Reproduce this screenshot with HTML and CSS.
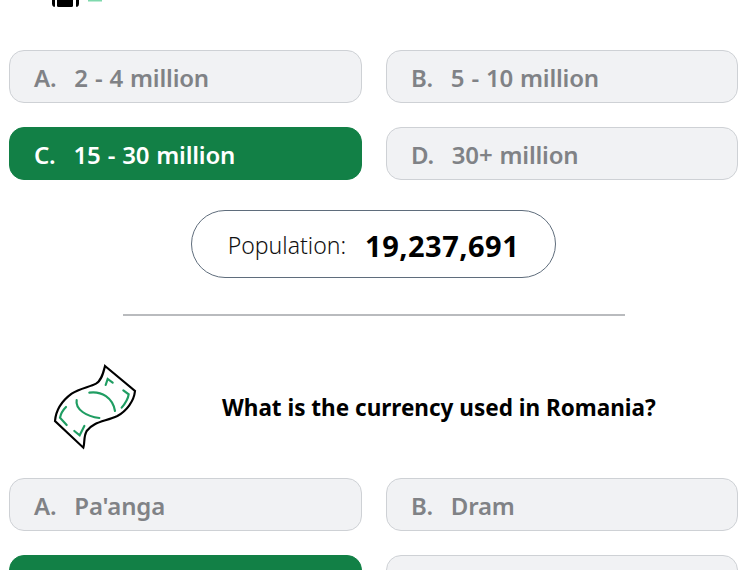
FILE: index.html
```html
<!DOCTYPE html>
<html lang="en">
<head>
<meta charset="utf-8">
<title>Romania quiz</title>
<link rel="stylesheet" href="styles.css">
</head>
<body>
<div class="sliver">
  <svg class="sliver-icon" width="60" height="8" viewBox="0 0 60 8" aria-hidden="true">
    <path d="M3 0h3v6.800h-1.500q-1.500-1-1.500-3z" fill="#000"/>
    <path d="M8 0h16v5.500q0 1.500-1.500 1.500h-13q-1.500 0-1.500-1.500z" fill="#000"/>
    <path d="M27 0h3v3.800q0 2-1.500 3h-1.500z" fill="#000"/>
    <rect x="39" y="0" width="14" height="1.500" fill="#7fd9ad"/>
  </svg>
</div>
<section class="options first">
  <div class="option"><span class="key">A.</span><span>2 - 4 million</span></div>
  <div class="option"><span class="key">B.</span><span>5 - 10 million</span></div>
  <div class="option correct"><span class="key">C.</span><span>15 - 30 million</span></div>
  <div class="option"><span class="key">D.</span><span>30+ million</span></div>
</section>
<div class="stat-wrap">
  <div class="stat"><span class="stat-label">Population:</span><span class="stat-value">19,237,691</span></div>
</div>
<hr class="divider">
<div class="question">
  <svg class="bill" width="130" height="110" viewBox="0 0 390 330" aria-hidden="true">
    <path d="M225 45L315 120C312 150 290 180 262 195C225 212 190 212 170 240C160 258 165 275 160 290L75 210C78 175 95 150 125 128C150 112 180 108 198 98C215 88 220 65 225 45Z" fill="#fff" stroke="#000" stroke-width="6.500" stroke-linejoin="miter"/>
    <g fill="none" stroke="#1f9d62" stroke-width="6.500" stroke-linecap="round">
      <path d="M178 125C215 120 248 140 255 180"/>
      <path d="M140 147C135 175 170 197 208 201"/>
      <path d="M227 102L233 84L248 95"/>
      <path d="M280 118L296 130C294 145 285 158 275 170"/>
      <path d="M108 168C98 178 92 190 90 200L110 222"/>
      <path d="M133 240L149 253L163 225"/>
    </g>
  </svg>
  <h2 class="question-text">What is the currency used in Romania?</h2>
</div>
<section class="options second">
  <div class="option"><span class="key">A.</span><span>Pa'anga</span></div>
  <div class="option"><span class="key">B.</span><span>Dram</span></div>
</section>
<div class="cut-row">
  <div class="cut-option correct"></div>
  <div class="cut-option"></div>
</div>
</body>
</html>
```
FILE: styles.css
```css
* { box-sizing: border-box; }
html, body { margin: 0; height: 570px; overflow: hidden; background: #fff; }
body { font-family: "Noto Sans", "Open Sans", sans-serif; color: #000; }

.sliver { height: 8px; padding-left: 49px; overflow: hidden; }
.sliver-icon { display: block; }

.options {
  display: grid;
  grid-template-columns: 353px 352px;
  grid-auto-rows: 53px;
  column-gap: 24px;
  row-gap: 24px;
  margin-left: 9px;
}
.first { margin-top: 42px; }
.second { margin-top: 17px; }

.option, .cut-option {
  background: #f1f2f4;
  border: 1px solid #ced1d5;
  border-radius: 15px;
}
.option {
  display: flex;
  align-items: center;
  gap: 18px;
  padding: 2px 0 0 24px;
  color: #808286;
  font-size: 24px;
  font-weight: 600;
  letter-spacing: -0.2px;
  word-spacing: 1px;
}
.option.correct, .cut-option.correct { background: #128046; border-color: #128046; color: #fff; }

.cut-row {
  display: grid;
  grid-template-columns: 353px 352px;
  grid-auto-rows: 53px;
  column-gap: 24px;
  margin: 24px 0 0 9px;
}

.stat-wrap { display: flex; justify-content: center; margin-top: 30px; padding-right: 5px; }
.stat {
  display: flex;
  align-items: center;
  justify-content: center;
  gap: 19px;
  width: 365px;
  height: 68px;
  padding-top: 2px;
  border: 1px solid #5f6d7c;
  border-radius: 34px;
}
.stat-label { font-size: 23px; font-weight: 300; color: #111; }
.stat-value { font-size: 29px; font-weight: 700; letter-spacing: 0.5px; }

.divider {
  width: 502px;
  height: 2px;
  margin: 36px 0 0 123px;
  border: 0;
  background: #b9bbbe;
}

.question { display: flex; align-items: center; height: 110px; margin-top: 35px; padding-left: 30px; }
.bill { display: block; flex: none; }
.question-text { margin: 2px 0 0 62px; font-size: 22.500px; font-weight: 700; }
```
